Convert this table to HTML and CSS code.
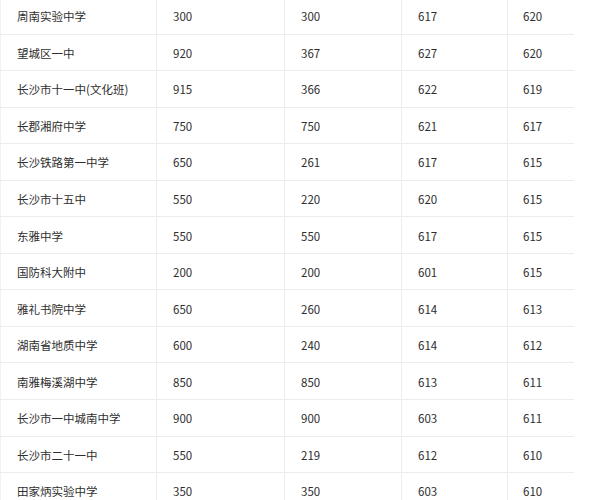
FILE: index.html
```html
<!DOCTYPE html>
<html lang="zh">
<head>
<meta charset="utf-8">
<link rel="stylesheet" href="styles.css">
</head>
<body>
<div class="table">
  <div class="row"><div class="cell">周南实验中学</div><div class="cell">300</div><div class="cell">300</div><div class="cell">617</div><div class="cell">620</div></div>
  <div class="row"><div class="cell">望城区一中</div><div class="cell">920</div><div class="cell">367</div><div class="cell">627</div><div class="cell">620</div></div>
  <div class="row"><div class="cell">长沙市十一中(文化班)</div><div class="cell">915</div><div class="cell">366</div><div class="cell">622</div><div class="cell">619</div></div>
  <div class="row"><div class="cell">长郡湘府中学</div><div class="cell">750</div><div class="cell">750</div><div class="cell">621</div><div class="cell">617</div></div>
  <div class="row"><div class="cell">长沙铁路第一中学</div><div class="cell">650</div><div class="cell">261</div><div class="cell">617</div><div class="cell">615</div></div>
  <div class="row"><div class="cell">长沙市十五中</div><div class="cell">550</div><div class="cell">220</div><div class="cell">620</div><div class="cell">615</div></div>
  <div class="row"><div class="cell">东雅中学</div><div class="cell">550</div><div class="cell">550</div><div class="cell">617</div><div class="cell">615</div></div>
  <div class="row"><div class="cell">国防科大附中</div><div class="cell">200</div><div class="cell">200</div><div class="cell">601</div><div class="cell">615</div></div>
  <div class="row"><div class="cell">雅礼书院中学</div><div class="cell">650</div><div class="cell">260</div><div class="cell">614</div><div class="cell">613</div></div>
  <div class="row"><div class="cell">湖南省地质中学</div><div class="cell">600</div><div class="cell">240</div><div class="cell">614</div><div class="cell">612</div></div>
  <div class="row"><div class="cell">南雅梅溪湖中学</div><div class="cell">850</div><div class="cell">850</div><div class="cell">613</div><div class="cell">611</div></div>
  <div class="row"><div class="cell">长沙市一中城南中学</div><div class="cell">900</div><div class="cell">900</div><div class="cell">603</div><div class="cell">611</div></div>
  <div class="row"><div class="cell">长沙市二十一中</div><div class="cell">550</div><div class="cell">219</div><div class="cell">612</div><div class="cell">610</div></div>
  <div class="row"><div class="cell">田家炳实验中学</div><div class="cell">350</div><div class="cell">350</div><div class="cell">603</div><div class="cell">610</div></div>
</div>
</body>
</html>
```
FILE: styles.css
```css
html, body {
  margin: 0;
  padding: 0;
  background: #ffffff;
  overflow: hidden;
}
.table {
  width: 574px;
  margin-top: -2px;
  font-family: "Noto Sans CJK SC", "Noto Sans", sans-serif;
  font-size: 11.5px;
  color: #2e2e2e;
}
.row {
  display: grid;
  grid-template-columns: 157px 128px 117px 106px 66px;
  height: 36.55px;
  box-sizing: border-box;
  border-bottom: 1px solid #ececec;
}
.cell {
  display: flex;
  align-items: center;
  padding-left: 16px;
  padding-top: 1px;
  box-sizing: border-box;
  border-right: 1px solid #ececec;
  white-space: nowrap;
}
.cell:first-child {
  border-left: 1px solid #f2f2f2;
}
.cell:last-child {
  border-right: none;
  padding-left: 15px;
}
```
